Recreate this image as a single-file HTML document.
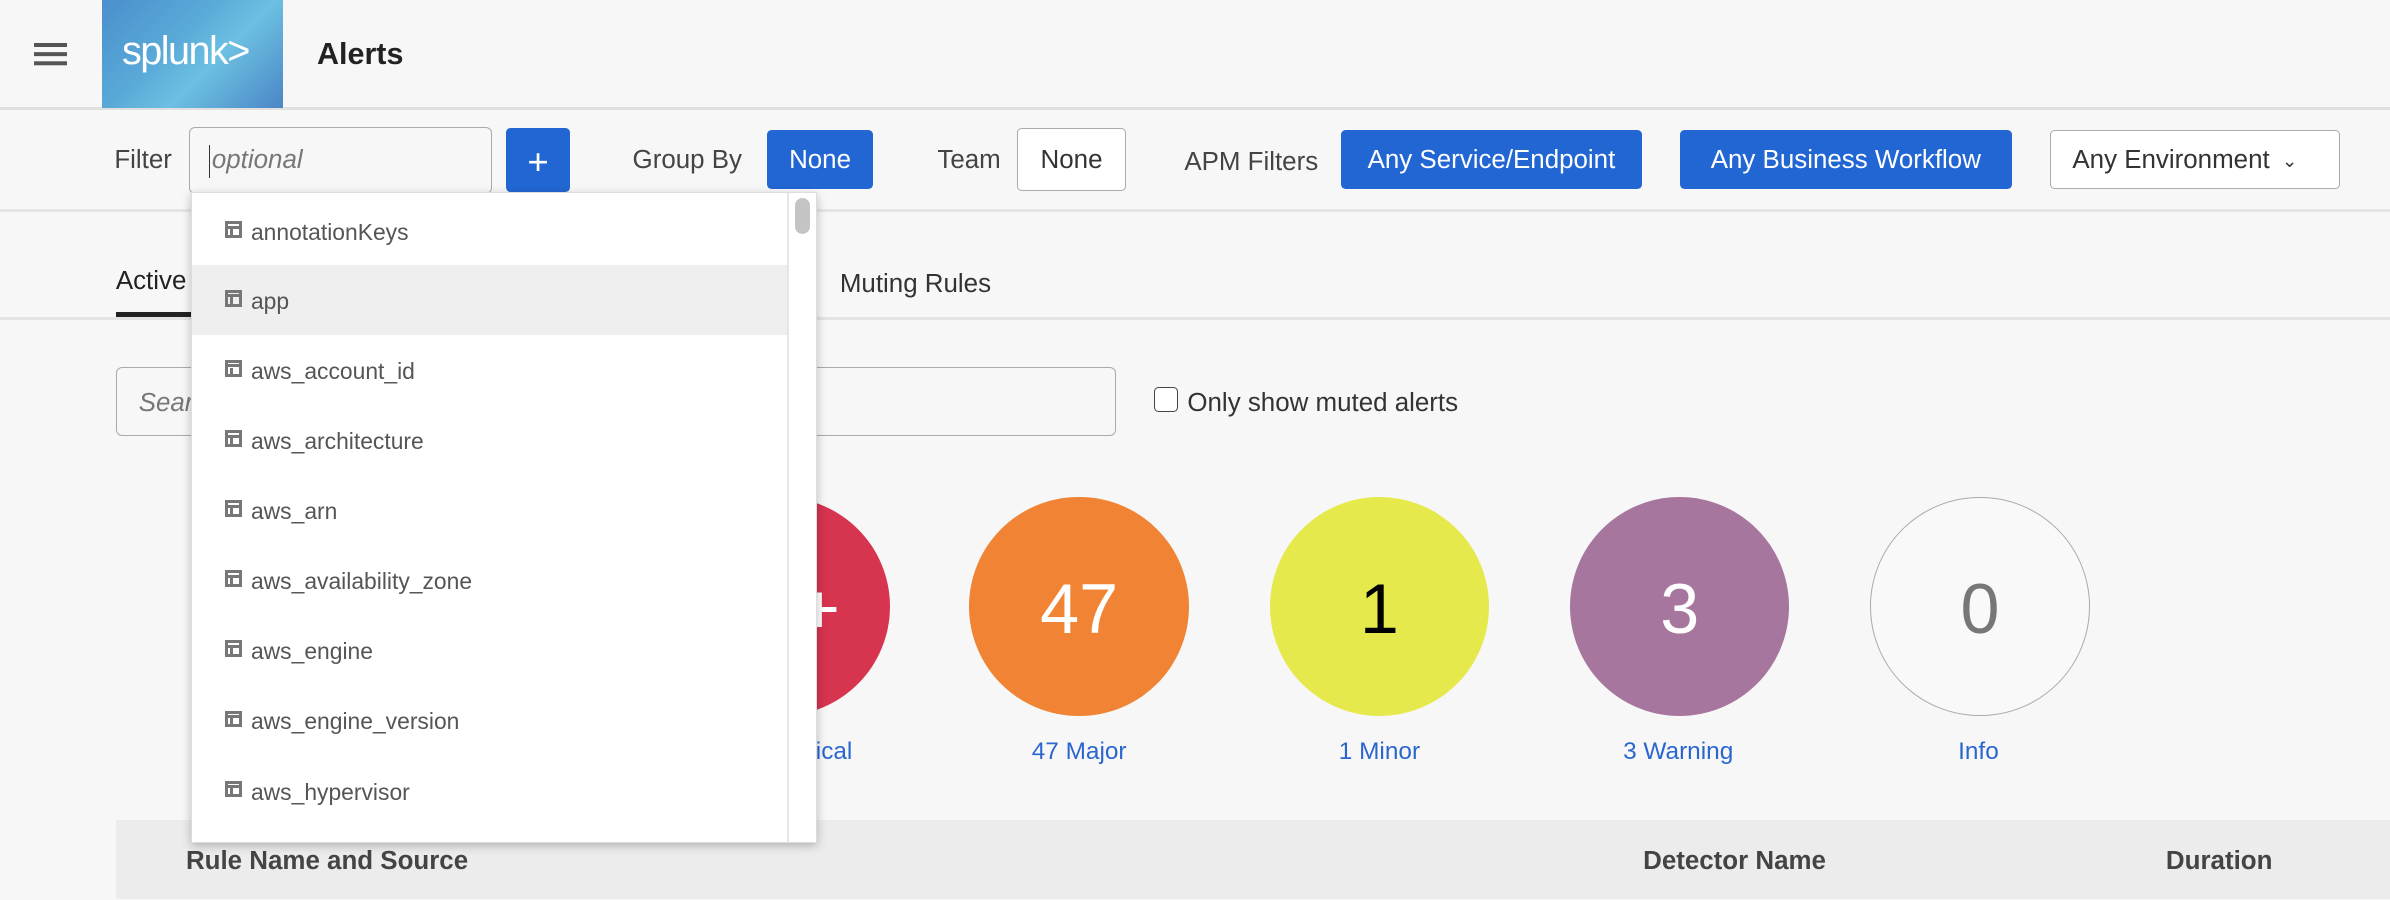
<!DOCTYPE html>
<html><head><meta charset="utf-8"><style>
html,body{margin:0;padding:0;background:#f7f7f7;overflow:hidden}
#w{position:relative;width:1568px;height:590px;zoom:1.52423;font-family:"Liberation Sans",sans-serif;color:#333;background:#f7f7f7;overflow:hidden}
.a{position:absolute}
.btn{position:absolute;border-radius:3px;font-size:17px;display:flex;align-items:center;justify-content:center;box-sizing:border-box;padding-top:2px}
.blue{background:#2266d3;color:#fff}
.wh{background:#fff;border:1px solid #aaa;color:#333}
.lbl{position:absolute;font-size:17px;color:#444}
.c{position:absolute;width:144px;height:144px;border-radius:50%;top:326px;display:flex;align-items:center;justify-content:center;font-size:46px;color:#fff;padding-top:3px;box-sizing:border-box}
.cl{position:absolute;top:484px;font-size:16px;color:#2a66cf;width:200px;text-align:center}
.it{position:absolute;left:0;width:392px;height:46px;font-size:15px;color:#555;display:flex;align-items:center;padding-top:2px;box-sizing:border-box}
.ic{width:11px;height:11px;border:2px solid #777;box-sizing:border-box;margin-left:22px;margin-right:6px;position:relative;top:-2px}
.ic:before{content:"";position:absolute;left:0;right:0;top:1px;border-top:2px solid #777}
.ic:after{content:"";position:absolute;left:1px;top:3px;bottom:0;border-left:2px solid #777}
</style></head><body><div id="w">
<div class="a" style="left:0;top:0;width:1568px;height:72px;border-bottom:2px solid #e0e0e0;box-sizing:border-box"></div>
<div class="a" style="left:22px;top:28px;width:22px;height:3px;background:#555;box-shadow:0 6px 0 #555,0 12px 0 #555"></div>
<div class="a" style="left:67px;top:0;width:119px;height:71px;background:linear-gradient(135deg,#4a8fcc 0%,#5aaad8 40%,#6cc0e2 60%,#4a86c6 100%)"></div>
<div class="a" style="left:80px;top:19px;font-size:26px;color:#fff;letter-spacing:-1px">splunk&gt;</div>
<div class="a" style="left:208px;top:24px;font-size:20px;font-weight:bold;color:#222">Alerts</div>
<div class="a" style="left:0;top:72px;width:1568px;height:67px;border-bottom:2px solid #e4e4e4;box-sizing:border-box"></div>
<div class="lbl" style="left:75px;top:96px">Filter</div>
<div class="a" style="left:124px;top:83px;width:199px;height:44px;border:1px solid #aaa;border-radius:4px;background:#f7f7f7;box-sizing:border-box"></div>
<div class="a" style="left:137px;top:95px;width:1px;height:22px;background:#333"></div>
<div class="a" style="left:139px;top:96px;font-size:17px;font-style:italic;color:#777">optional</div>
<div class="btn blue" style="left:332px;top:84px;width:42px;height:42px;font-size:24px">+</div>
<div class="lbl" style="left:415px;top:96px">Group By</div>
<div class="btn blue" style="left:503px;top:85px;width:70px;height:39px">None</div>
<div class="lbl" style="left:615px;top:96px">Team</div>
<div class="btn wh" style="left:667px;top:84px;width:72px;height:41px">None</div>
<div class="lbl" style="left:777px;top:97px">APM Filters</div>
<div class="btn blue" style="left:880px;top:85px;width:197px;height:39px">Any Service/Endpoint</div>
<div class="btn blue" style="left:1102px;top:85px;width:218px;height:39px">Any Business Workflow</div>
<div class="btn wh" style="left:1345px;top:85px;width:190px;height:39px;justify-content:flex-start;padding-left:14px">Any Environment <span style="font-size:12px;margin-left:8px">&#8964;</span></div>
<div class="a" style="left:0;top:208px;width:1568px;height:2px;background:#e4e4e4"></div>
<div class="a" style="left:76px;top:175px;font-size:17px;color:#222">Active</div>
<div class="a" style="left:76px;top:205px;width:60px;height:3px;background:#222"></div>
<div class="a" style="left:551px;top:177px;font-size:17px;color:#333">Muting Rules</div>
<div class="a" style="left:76px;top:241px;width:656px;height:45px;border:1px solid #aaa;border-radius:4px;box-sizing:border-box"></div>
<div class="a" style="left:91px;top:255px;font-size:17px;font-style:italic;color:#777">Search</div>
<div class="a" style="left:757px;top:254px;width:16px;height:16px;border:1px solid #444;border-radius:3px;box-sizing:border-box;background:#fff"></div>
<div class="a" style="left:779px;top:255px;font-size:17px;color:#333">Only show muted alerts</div>
<div class="c" style="left:440px;background:#d7344f">99+</div>
<div class="c" style="left:636px;background:#f08434">47</div>
<div class="c" style="left:833px;background:#e5e94b;color:#000">1</div>
<div class="c" style="left:1030px;background:#a6769e">3</div>
<div class="c" style="left:1227px;background:#f9f9f9;border:1px solid #aaa;color:#777">0</div>
<div class="cl" style="left:419px">99+ Critical</div>
<div class="cl" style="left:608px">47 Major</div>
<div class="cl" style="left:805px">1 Minor</div>
<div class="cl" style="left:1001px">3 Warning</div>
<div class="cl" style="left:1198px">Info</div>
<div class="a" style="left:76px;top:538px;width:1492px;height:52px;background:#ececec"></div>
<div class="a" style="left:122px;top:556px;font-size:17px;font-weight:bold;color:#444">Rule Name and Source</div>
<div class="a" style="left:1078px;top:556px;font-size:17px;font-weight:bold;color:#444">Detector Name</div>
<div class="a" style="left:1421px;top:556px;font-size:17px;font-weight:bold;color:#444">Duration</div>
<div class="a" style="left:125px;top:126px;width:411px;height:427px;background:#fff;box-shadow:0 2px 6px rgba(0,0,0,.25);border:1px solid #ddd;box-sizing:border-box;overflow:hidden">
 <div class="it" style="top:2px"><span class="ic"></span>annotationKeys</div>
 <div class="it" style="top:47px;background:#efefef"><span class="ic"></span>app</div>
 <div class="it" style="top:93px"><span class="ic"></span>aws_account_id</div>
 <div class="it" style="top:139px"><span class="ic"></span>aws_architecture</div>
 <div class="it" style="top:185px"><span class="ic"></span>aws_arn</div>
 <div class="it" style="top:231px"><span class="ic"></span>aws_availability_zone</div>
 <div class="it" style="top:277px"><span class="ic"></span>aws_engine</div>
 <div class="it" style="top:323px"><span class="ic"></span>aws_engine_version</div>
 <div class="it" style="top:369px"><span class="ic"></span>aws_hypervisor</div>
 <div class="a" style="left:391px;top:0;width:1px;height:427px;background:#e6e6e6"></div>
 <div class="a" style="left:396px;top:3px;width:10px;height:24px;border-radius:5px;background:#c4c4c4"></div>
</div>
</div></body></html>
